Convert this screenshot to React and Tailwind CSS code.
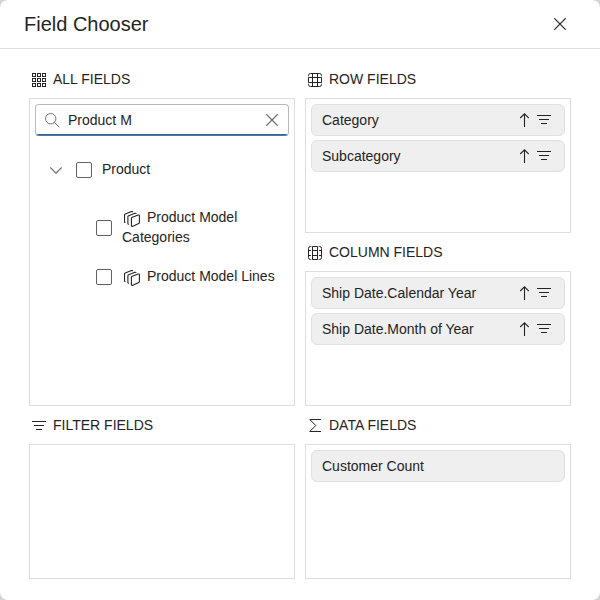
import React from "react";

function Svg({ w, h, children, className = "", color = "#242424" }) {
  return (
    <svg
      width={w}
      height={h}
      viewBox={`0 0 ${w} ${h}`}
      fill="none"
      stroke={color}
      strokeWidth="1"
      className={`block shrink-0 ${className}`}
    >
      {children}
    </svg>
  );
}

function GridIcon() {
  return (
    <Svg w={14} h={14}>
      {[0.5, 5.5, 10.5].map((y) =>
        [0.5, 5.5, 10.5].map((x) => <rect key={`${x}-${y}`} x={x} y={y} width="3" height="3" />)
      )}
    </Svg>
  );
}

function RowIcon() {
  return (
    <Svg w={14} h={14}>
      <path d="M.5 4.500h13v5H.5zM4.500 4.500v5M9.500 4.500v5" />
      <path d="M.5 3.300V2.500A2 2 0 0 1 2.500.5h9a2 2 0 0 1 2 2v.8M4.500.5V4M9.500.5V4M.5 10.700v.8a2 2 0 0 0 2 2h9a2 2 0 0 0 2-2v-.8M4.500 13.500V10M9.500 13.500V10" />
    </Svg>
  );
}

function ColumnIcon() {
  return (
    <Svg w={14} h={14}>
      <path d="M4.500.5v13h5V.5zM4.500 4.500h5M4.500 9.500h5" />
      <path d="M3.300 .5H2.500a2 2 0 0 0-2 2v9a2 2 0 0 0 2 2h.8M.5 4.500H3M.5 9.500H3M10.700 .5h.8a2 2 0 0 1 2 2v9a2 2 0 0 1-2 2h-.8M13.500 4.500H11M13.500 9.500H11" />
    </Svg>
  );
}

function FilterIcon() {
  return (
    <Svg w={14} h={10}>
      <path d="M0 .5h14M2 4.500h10M4 8.500h6" />
    </Svg>
  );
}

function SigmaIcon() {
  return (
    <Svg w={14} h={14}>
      <path d="M13 .5H1.800l6 6L1.800 12.500H13" />
    </Svg>
  );
}

function ArrowUpIcon() {
  return (
    <Svg w={10} h={14}>
      <path d="M5.500 14V.8M1.200 5L5.500.8L9.800 5" strokeWidth="1.1" />
    </Svg>
  );
}

function CloseIcon({ color }) {
  return (
    <Svg w={12} h={12} color={color}>
      <path d="M.3.3l11.400 11.400M11.700.3L.3 11.700" strokeWidth="1.2" />
    </Svg>
  );
}

function HierarchyIcon() {
  return (
    <svg
      width="16"
      height="16"
      viewBox="0 0 16 16"
      fill="none"
      stroke="#242424"
      strokeWidth="1.1"
      strokeLinejoin="round"
      className="relative top-px mr-[7px] inline-block align-[-4px]"
    >
      <path d="M8.200 6.200l6-2.200q1.200-.3 1.200.8v6.700q0 .7-.7 1l-5.800 2.700q-1.500.5-1.500-.8V7.200q0-.7.800-1z" />
      <path d="M4.900 13.200q-1 .2-1-.8V5.700q0-.7.800-1l6.200-2.400q1-.3 1.300.6" />
      <path d="M1.500 11.400q-1 .2-1-.8V4q0-.7.800-1L7.500.6q1-.3 1.300.5" />
    </svg>
  );
}

function Section({ icon, title, className = "", children }) {
  return (
    <section className={`flex flex-col ${className}`}>
      <h2 className="flex h-[38px] items-center pl-[3px]">
        <span className="flex h-4 w-[14px] items-center pt-px">{icon}</span>
        <span className="ml-[7px] text-sm leading-5">{title}</span>
      </h2>
      <div className="flex flex-1 flex-col gap-1 border border-[#dedede] p-[5px]">{children}</div>
    </section>
  );
}

function Field({ label, actions = true }) {
  return (
    <div className="flex h-8 items-center rounded-md border border-[#e0e0e0] bg-[#efefef] pr-[13px] pl-[10px] text-sm">
      <span className="flex-1">{label}</span>
      {actions && (
        <span className="flex items-center gap-2">
          <ArrowUpIcon />
          <FilterIcon />
        </span>
      )}
    </div>
  );
}

function Checkbox() {
  return <span className="block size-4 shrink-0 rounded-[2px] border border-[#616161] bg-white" />;
}

export default function App() {
  return (
    <div className="h-[600px] w-[600px] bg-[#d4d4d4] font-['Liberation_Sans',Arial,sans-serif] text-[#242424]">
      <div className="flex h-full flex-col rounded-lg bg-white">
        <header className="flex h-[49px] items-center justify-between border-b border-[#dedede] pr-[34px] pl-6">
          <h1 className="text-xl leading-6">Field Chooser</h1>
          <CloseIcon color="#242424" />
        </header>
        <main className="grid flex-1 grid-cols-2 grid-rows-[173px_173px_173px] gap-x-[10px] px-[29px] pt-[11px]">
          <Section icon={<GridIcon />} title="ALL FIELDS" className="row-span-2">
            <div className="relative flex h-8 shrink-0 items-center overflow-hidden rounded border border-[#b8b8b8] border-b-[#707070] pr-[10px] pl-[9px]">
              <Svg w={15} h={15} color="#707070">
                <circle cx="5.700" cy="5.700" r="5.200" />
                <path d="M9.500 9.500l4.700 4.700" />
              </Svg>
              <span className="ml-2 flex-1 text-sm">Product M</span>
              <CloseIcon color="#616161" />
              <span className="absolute -right-px -bottom-px -left-px h-[2px] bg-[#186abf]" />
            </div>
            <div className="flex flex-col pt-[19px] pl-[15px] text-sm leading-5">
              <div className="flex h-5 items-center">
                <Svg w={12} h={7} color="#707070" className="mt-[3px]">
                  <path d="M.3.5L6 6.200L11.700.5" strokeWidth="1.2" />
                </Svg>
                <span className="mt-px ml-[14px]">
                  <Checkbox />
                </span>
                <span className="ml-[10px]">Product</span>
              </div>
              <div className="mt-7 flex items-center pl-[46px]">
                <span className="mt-px">
                  <Checkbox />
                </span>
                <span className="ml-[10px] w-[156px]">
                  <span className="inline-block w-[2px]" />
                  <HierarchyIcon />
                  Product Model Categories
                </span>
              </div>
              <div className="mt-[19px] flex items-center pl-[46px]">
                <span className="mt-px">
                  <Checkbox />
                </span>
                <span className="ml-[10px] whitespace-nowrap">
                  <span className="inline-block w-[2px]" />
                  <HierarchyIcon />
                  Product Model Lines
                </span>
              </div>
            </div>
          </Section>
          <Section icon={<RowIcon />} title="ROW FIELDS">
            <Field label="Category" />
            <Field label="Subcategory" />
          </Section>
          <Section icon={<ColumnIcon />} title="COLUMN FIELDS">
            <Field label="Ship Date.Calendar Year" />
            <Field label="Ship Date.Month of Year" />
          </Section>
          <Section icon={<FilterIcon />} title="FILTER FIELDS" />
          <Section icon={<SigmaIcon />} title="DATA FIELDS">
            <Field label="Customer Count" actions={false} />
          </Section>
        </main>
      </div>
    </div>
  );
}
